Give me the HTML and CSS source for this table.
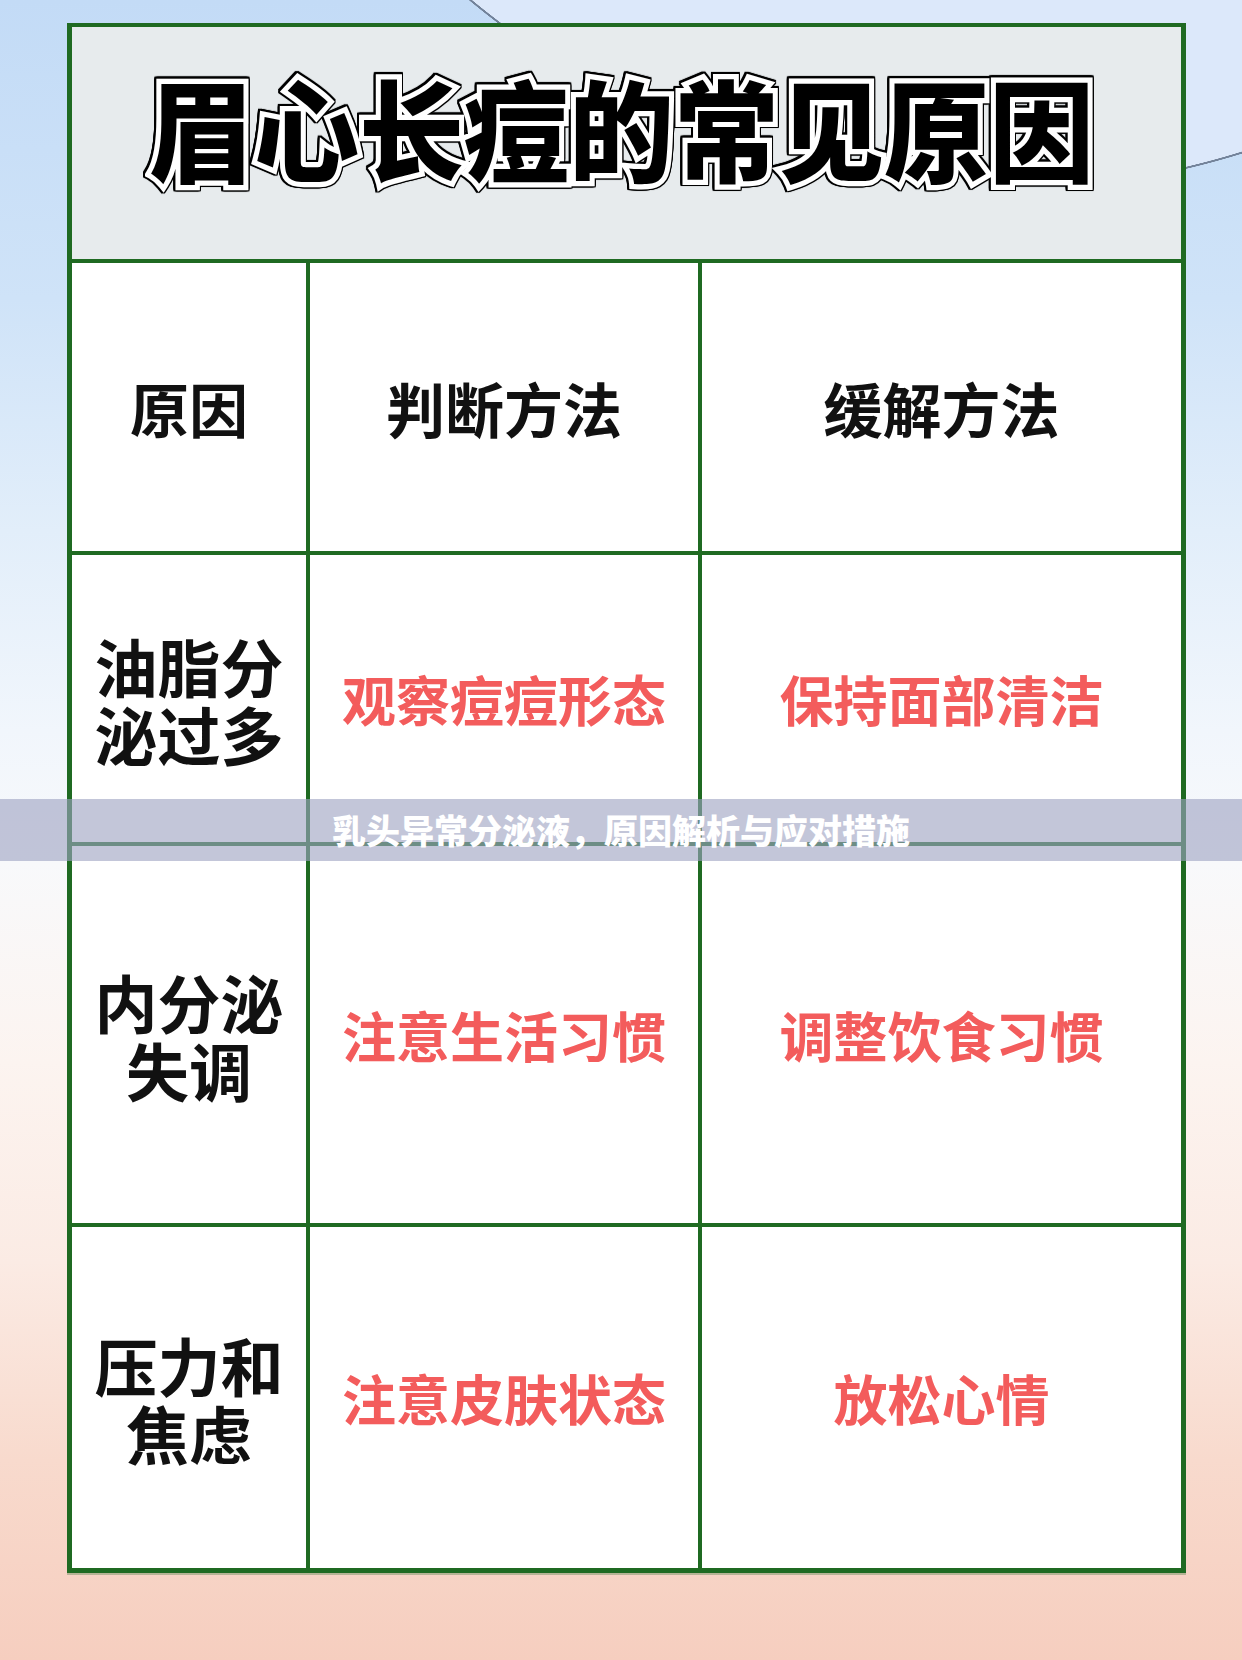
FILE: index.html
```html
<!DOCTYPE html>
<html lang="zh-CN">
<head>
<meta charset="utf-8">
<title>眉心长痘的常见原因</title>
<link rel="stylesheet" href="styles.css">
</head>
<body>
  <main class="page">
    <section class="chart">
      <div class="title-cell"><h1 class="title">眉心长痘的常见原因</h1></div>

      <div class="cell head">原因</div>
      <div class="cell head">判断方法</div>
      <div class="cell head">缓解方法</div>

      <div class="cell cause">油脂分泌过多</div>
      <div class="cell tip">观察痘痘形态</div>
      <div class="cell tip">保持面部清洁</div>

      <div class="cell cause">内分泌失调</div>
      <div class="cell tip">注意生活习惯</div>
      <div class="cell tip">调整饮食习惯</div>

      <div class="cell cause">压力和焦虑</div>
      <div class="cell tip">注意皮肤状态</div>
      <div class="cell tip">放松心情</div>
    </section>
  </main>
  <div class="banner"><span class="banner-text">乳头异常分泌液，原因解析与应对措施</span></div>
</body>
</html>
```

FILE: styles.css
```css
* { box-sizing: border-box; }

html, body {
  margin: 0;
  padding: 0;
}

body {
  position: relative;
  width: 1242px;
  height: 1660px;
  overflow: hidden;
  font-family: "Noto Sans CJK SC", "Noto Sans", sans-serif;
  background:
    radial-gradient(circle 827px at 997px -636px,
      #dce8fa 0,
      #dce8fa 824.5px,
      rgba(70, 82, 104, 0.65) 825px,
      rgba(70, 82, 104, 0.65) 826.5px,
      rgba(220, 232, 250, 0) 827px),
    linear-gradient(180deg,
      #c3dbf6 0%,
      #cfe3f8 18%,
      #e2eefa 32%,
      #f1f6fc 44%,
      #f8f9fb 52%,
      #fcf4f0 64%,
      #fbebe4 76%,
      #f8dacd 88%,
      #f6cebf 100%);
}

.page {
  position: relative;
  padding: 23px 0 0 67px;
}

.chart {
  width: 1119px;
  display: grid;
  grid-template-columns: 234px 388px 479px;
  grid-template-rows: 232px 288px 287px 377px 341px;
  gap: 4px;
  padding: 4px 5px 5px 5px;
  background: #1f6a22;
  box-shadow: 0 2px 0 rgba(60, 120, 60, 0.35);
}

.title-cell {
  grid-column: 1 / -1;
  background: #e7ebed;
  display: flex;
  align-items: center;
  justify-content: center;
  padding-bottom: 34px;
  padding-right: 10px;
}

.title {
  margin: 0;
  font-size: 105px;
  font-weight: 900;
  line-height: 1;
  color: #000;
  letter-spacing: 0;
  transform: scaleY(1.05);
  -webkit-text-stroke: 10px #fff;
  paint-order: stroke fill;
  filter: drop-shadow(1.5px 0 0 #000) drop-shadow(-1.5px 0 0 #000) drop-shadow(0 1.5px 0 #000) drop-shadow(0 -1.5px 0 #000);
}

.cell {
  background: #fff;
  display: flex;
  align-items: center;
  justify-content: center;
  text-align: center;
}

.head {
  font-size: 59px;
  font-weight: 700;
  color: #111;
  line-height: 1;
}

.cause {
  font-size: 63px;
  font-weight: 700;
  color: #111;
  line-height: 68px;
  padding: 0 8px;
}

.tip {
  font-size: 54px;
  font-weight: 700;
  color: #f35c5c;
  line-height: 1;
}

.banner {
  position: absolute;
  left: 0;
  top: 799px;
  width: 100%;
  height: 62px;
  z-index: 2;
  background: rgba(158, 163, 194, 0.62);
  display: flex;
  align-items: center;
  justify-content: center;
}

.banner-text {
  color: #fff;
  font-size: 34px;
  font-weight: 900;
  line-height: 1;
}
```
